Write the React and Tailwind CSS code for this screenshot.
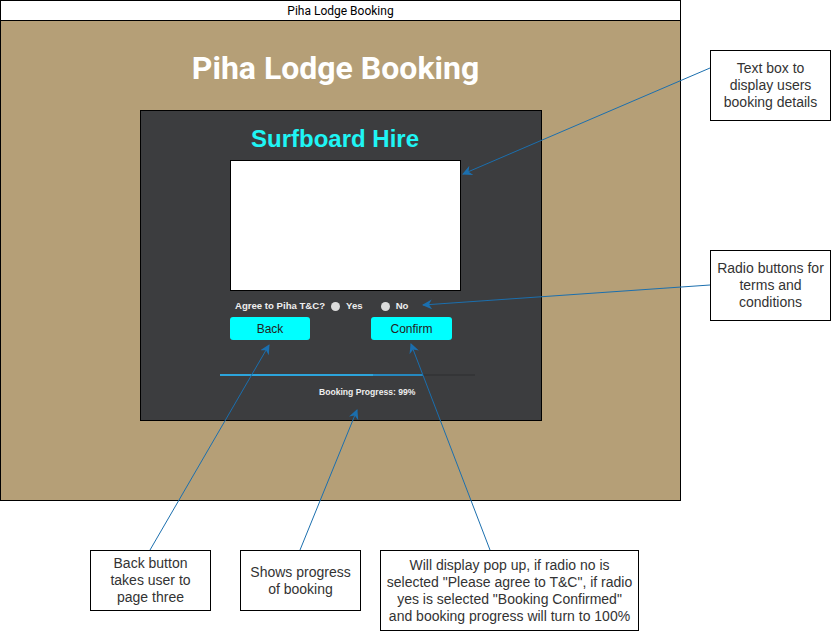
import React from "react";

const notes = [
  { id: "text", left: 710, top: 50, w: 121, h: 71, text: ["Text box to", "display users", "booking details"] },
  { id: "radio", left: 710, top: 250, w: 121, h: 71, text: ["Radio buttons for", "terms and", "conditions"] },
  { id: "back", left: 90, top: 550, w: 121, h: 61, text: ["Back button", "takes user to", "page three"] },
  { id: "prog", left: 240, top: 550, w: 121, h: 61, text: ["Shows progress", "of booking"] },
  {
    id: "confirm",
    left: 380,
    top: 550,
    w: 259,
    h: 81,
    text: [
      "Will display pop up, if radio no is",
      'selected "Please agree to T&C", if radio',
      'yes is selected "Booking Confirmed"',
      "and booking progress will turn to 100%",
    ],
  },
];

const arrows = [
  [710, 68, 463, 174],
  [710, 285, 423, 305],
  [150, 550, 269, 345],
  [300, 550, 357, 410],
  [490, 550, 411, 344],
];

const Note = ({ n }) => (
  <div
    className="absolute flex flex-col items-center justify-center border border-black bg-white text-[14px] leading-[17px] text-[#333] text-center"
    style={{ left: n.left, top: n.top, width: n.w, height: n.h, fontFamily: '"Liberation Sans", Arial, sans-serif' }}
  >
    {n.text.map((t) => (
      <div key={t} className="whitespace-nowrap">{t}</div>
    ))}
  </div>
);

const Radio = ({ label }) => (
  <label className="flex items-center gap-[6px]">
    <span className="w-[9px] h-[9px] rounded-full bg-[#dcdcdc]" />
    <span>{label}</span>
  </label>
);

export default function App() {
  return (
    <div className="relative w-[831px] h-[631px] bg-white overflow-hidden">
      {/* booking window */}
      <div className="absolute left-0 top-0 w-[681px] h-[501px] border border-black flex flex-col">
        <div
          className="h-[20px] border-b border-black bg-white flex items-center justify-center text-[12px] text-black"
          style={{ fontFamily: "Roboto, sans-serif" }}
        >
          Piha Lodge Booking
        </div>
        <div className="flex-1 bg-[#b59f77] flex flex-col">
          <h1
            className="mt-[29px] ml-[-10px] text-center text-white font-bold text-[32px] leading-[36px]"
            style={{ fontFamily: "Roboto, sans-serif" }}
          >
            Piha Lodge Booking
          </h1>
          <div
            className="mt-[24px] ml-[139px] w-[402px] h-[311px] bg-[#3c3d3f] border border-black flex flex-col"
            style={{ fontFamily: '"Liberation Sans", Arial, sans-serif' }}
          >
            <h2 className="mt-[14px] ml-[-12px] text-center text-[#1ff5f5] font-bold text-[24px] leading-[27px]">
              Surfboard Hire
            </h2>
            <textarea
              readOnly
              className="mt-[8px] ml-[89px] w-[231px] h-[131px] bg-white border border-black resize-none outline-none"
            />
            <div className="mt-[9px] ml-[94px] flex items-center text-[9.6px] font-bold text-[#eee] leading-[12px]">
              <span className="mr-[6px]">Agree to Piha T&amp;C?</span>
              <Radio label="Yes" />
              <span className="w-[18px]" />
              <Radio label="No" />
            </div>
            <div className="mt-[5px] ml-[89px] flex gap-[61px]">
              <button className="w-[80px] h-[23px] rounded-[3px] bg-[#00ffff] text-[12px] text-[#222]">Back</button>
              <button className="w-[81px] h-[23px] rounded-[3px] bg-[#00ffff] text-[12px] text-[#222]">Confirm</button>
            </div>
            <div className="mt-[34px] ml-[79px] w-[255px] h-[2px] flex bg-[#343537]">
              <div className="w-[153px] bg-[#2ca5dc]" />
              <div className="w-[50px] bg-[#2588bf]" />
            </div>
            <div className="mt-[10px] ml-[178px] text-[8.6px] font-bold text-[#eee] leading-[12px]">
              Booking Progress: 99%
            </div>
          </div>
        </div>
      </div>

      {notes.map((n) => (
        <Note key={n.id} n={n} />
      ))}

      <svg className="absolute left-0 top-0" width="831" height="631">
        <defs>
          <marker id="ah" viewBox="0 0 10 10" refX="9" refY="5" markerWidth="10" markerHeight="10" orient="auto" markerUnits="userSpaceOnUse">
            <path d="M0 0 L10 5 L0 10 L3 5 Z" fill="#1b6fae" />
          </marker>
        </defs>
        {arrows.map(([x1, y1, x2, y2], i) => (
          <line key={i} x1={x1} y1={y1} x2={x2} y2={y2} stroke="#1b6fae" strokeWidth="1" markerEnd="url(#ah)" />
        ))}
      </svg>
    </div>
  );
}
